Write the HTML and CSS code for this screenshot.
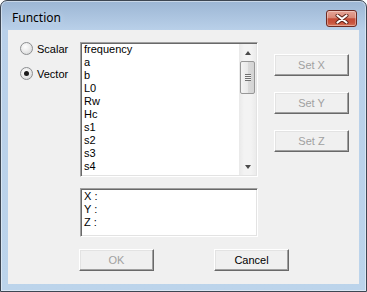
FILE: index.html
```html
<!doctype html>
<html lang="en">
<head>
	<meta charset="UTF-8">
	<title>Function</title>
	<link rel="stylesheet" href="styles.css">
</head>
<body>
	<div class="window">
		<div class="titlebar">
			<span class="title">Function</span>
			<div class="close">
				<svg width="14" height="10" viewBox="0 0 14 10">
					<path d="M2.5 1.5 L11.5 8.5 M11.5 1.5 L2.5 8.5" stroke="#5a2118" stroke-width="4" stroke-linecap="round"/>
					<path d="M2.5 1.5 L11.5 8.5 M11.5 1.5 L2.5 8.5" stroke="#fff" stroke-width="2.2" stroke-linecap="round"/>
				</svg>
			</div>
		</div>
		<div class="client">
			<div class="top">
				<div class="modes">
					<label class="radio"><span class="dot"></span>Scalar</label>
					<label class="radio checked"><span class="dot"></span>Vector</label>
				</div>
				<div class="list sunken">
					<ul class="items">
						<li>frequency</li>
						<li>a</li>
						<li>b</li>
						<li>L0</li>
						<li>Rw</li>
						<li>Hc</li>
						<li>s1</li>
						<li>s2</li>
						<li>s3</li>
						<li>s4</li>
						<li>h1</li>
					</ul>
					<div class="scrollbar">
						<div class="arrow"><span class="tri up"></span></div>
						<div class="track"><div class="thumb"><span class="grip"></span></div></div>
						<div class="arrow"><span class="tri down"></span></div>
					</div>
				</div>
				<div class="sets">
					<button class="btn" disabled>Set X</button>
					<button class="btn" disabled>Set Y</button>
					<button class="btn" disabled>Set Z</button>
				</div>
			</div>
			<div class="coords sunken">X :<br>Y :<br>Z :</div>
			<div class="actions">
				<button class="btn" disabled>OK</button>
				<button class="btn">Cancel</button>
			</div>
		</div>
	</div>
</body>
</html>
```

FILE: styles.css
```css
body{
	margin: 0;
	background: #fff;
	font-family: "Liberation Sans", Arial, sans-serif;
	font-size: 11px;
}
.window{
	width: 367px;
	height: 292px;
	box-sizing: border-box;
	border: 1px solid #3d4652;
	border-radius: 7px 7px 0 0;
	padding: 0 7px 7px;
	display: flex;
	flex-direction: column;
	background: linear-gradient(#9cb6d4 0, #b9d0e9 29px, #bcd4eb 100%);
	box-shadow: inset 0 0 0 1px rgba(255,255,255,0.45);
}
.titlebar{
	height: 29px;
	box-sizing: border-box;
	padding: 5px 2px 0 4px;
	display: flex;
	justify-content: space-between;
	align-items: flex-start;
}
.title{
	line-height: 24px;
	font-family: "Noto Sans", "Open Sans", sans-serif;
	font-size: 12px;
	color: #000;
	text-shadow: 0 0 6px rgba(255,255,255,0.6);
}
.close{
	margin-top: 4px;
	width: 31px;
	height: 17px;
	box-sizing: border-box;
	border: 1px solid #6e2a22;
	border-radius: 3px;
	display: flex;
	align-items: center;
	justify-content: center;
	background: linear-gradient(#e6a598 0, #d98877 45%, #c44a35 52%, #c9553f 80%, #d97a5e 100%);
	box-shadow: inset 0 0 0 1px rgba(255,255,255,0.35);
}
.client{
	flex: 1;
	background: #f0f0f0;
	padding-top: 12px;
}
.top{
	display: flex;
	align-items: flex-start;
}
.modes{
	width: 72px;
	box-sizing: border-box;
	padding-left: 12px;
	display: flex;
	flex-direction: column;
	gap: 12px;
}
.radio{
	display: flex;
	align-items: center;
	height: 13px;
	color: #000;
}
.dot{
	width: 13px;
	height: 13px;
	box-sizing: border-box;
	margin-right: 4px;
	border: 1px solid #8c8e90;
	border-radius: 50%;
	background: radial-gradient(circle at 40% 35%, #fdfdfd 0, #ececec 45%, #cfd0d1 100%);
	display: flex;
	align-items: center;
	justify-content: center;
}
.radio.checked .dot::after{
	content: "";
	width: 5px;
	height: 5px;
	border-radius: 50%;
	background: #1b1b1b;
}
.sunken{
	box-sizing: border-box;
	border: 1px solid;
	border-color: #a0a0a0 #fff #fff #a0a0a0;
	box-shadow: inset 1px 1px 0 #696969, inset -1px -1px 0 #e3e3e3;
	padding: 1px;
	background: #fff;
}
.list{
	width: 178px;
	height: 135px;
	display: flex;
}
.items{
	flex: 1;
	margin: 0;
	padding: 0 0 0 2px;
	list-style: none;
	overflow: hidden;
	line-height: 13px;
	color: #000;
}
.items li:first-child{
	margin-top: -1px;
}
.scrollbar{
	width: 17px;
	display: flex;
	flex-direction: column;
	background: linear-gradient(to right, #e9e9e9, #f3f3f3 30%, #f3f3f3 70%, #ebebeb);
}
.arrow{
	height: 17px;
	display: flex;
	align-items: center;
	justify-content: center;
}
.tri{
	width: 0;
	height: 0;
	border-left: 3.5px solid transparent;
	border-right: 3.5px solid transparent;
}
.tri.up{
	border-bottom: 4px solid #4a4a4a;
}
.tri.down{
	border-top: 4px solid #4a4a4a;
}
.track{
	flex: 1;
}
.thumb{
	height: 33px;
	margin: 0 1px;
	box-sizing: border-box;
	border: 1px solid #979797;
	border-radius: 2px;
	background: linear-gradient(to right, #f4f4f4, #e9e9e9 50%, #dadada 55%, #d4d4d4);
	display: flex;
	align-items: center;
	justify-content: center;
}
.grip{
	width: 6px;
	height: 7px;
	background: repeating-linear-gradient(to bottom, #707070 0 1px, #f2f2f2 1px 2px);
}
.sets{
	margin: 12px 0 0 16px;
	display: flex;
	flex-direction: column;
	gap: 16px;
}
.btn{
	width: 75px;
	height: 22px;
	box-sizing: border-box;
	padding: 0;
	border: 1px solid;
	border-color: #fff #696969 #696969 #fff;
	box-shadow: inset -1px -1px 0 #a0a0a0, inset 1px 1px 0 #e3e3e3;
	background: #f0f0f0;
	font-family: "Liberation Sans", Arial, sans-serif;
	font-size: 11px;
	color: #000;
}
.btn:disabled{
	color: #a0a0a0;
}
.coords{
	width: 178px;
	height: 49px;
	margin: 11px 0 0 72px;
	padding-left: 3px;
	line-height: 13px;
	color: #000;
}
.actions{
	margin-top: 12px;
	padding-left: 71px;
	display: flex;
	gap: 60px;
}
```
